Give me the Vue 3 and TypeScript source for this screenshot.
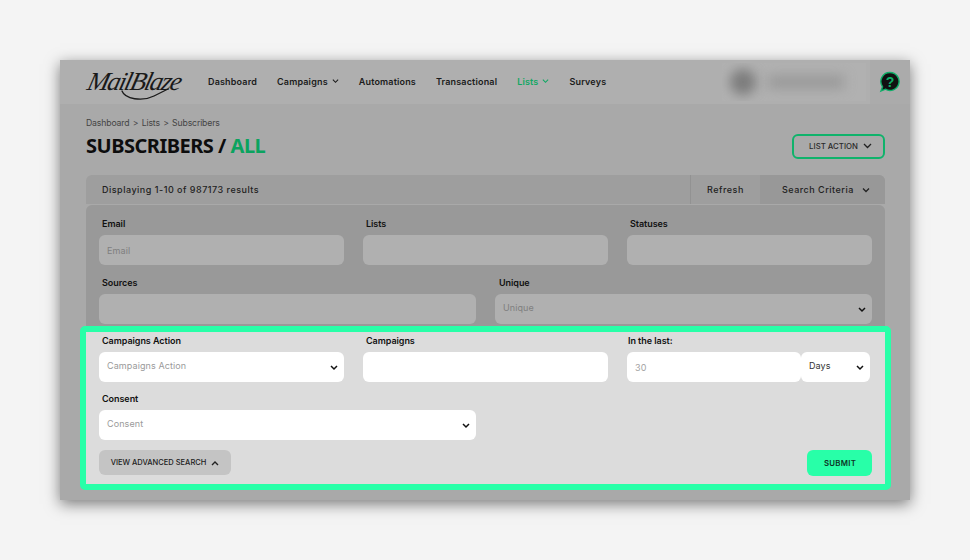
<script setup lang="ts">
const nav = [
  { label: 'Dashboard' },
  { label: 'Campaigns', chevron: true },
  { label: 'Automations' },
  { label: 'Transactional' },
  { label: 'Lists', chevron: true, active: true },
  { label: 'Surveys' },
]
</script>

<template>
  <div class="page">
    <div class="card">
      <header class="top">
        <div class="logo">
          <span class="logo-text">MailBlaze</span>
          <svg class="swash" width="60" height="14" viewBox="0 0 60 14" fill="none">
            <path d="M2 3C5 11 22 14 34 8C42 4 46 2 48 1" stroke="#1a1a1a" stroke-width="1.3" stroke-linecap="round" />
          </svg>
        </div>
        <nav class="nav">
          <a v-for="n in nav" :key="n.label" class="nav-item" :class="{ active: n.active }">
            {{ n.label }}
            <svg v-if="n.chevron" width="7" height="6" viewBox="0 0 8 6" fill="none"><path d="M1 1.5L4 4.5L7 1.5" stroke="currentColor" stroke-width="1.2" /></svg>
          </a>
        </nav>
        <div class="user">
          <span class="avatar"></span>
          <span class="uname"></span>
        </div>
        <div class="help">
          <svg width="22" height="22" viewBox="0 0 22 22">
            <path d="M11 1.5a9 9 0 1 1-4.6 16.7L2 20l1.6-4.2A9 9 0 0 1 11 1.5Z" fill="#111" stroke="#0fae68" stroke-width="1.4" />
            <text x="11" y="16" text-anchor="middle" class="qmark">?</text>
          </svg>
        </div>
      </header>

      <main class="body">
        <div class="crumbs">Dashboard <i>&gt;</i> Lists <i>&gt;</i> Subscribers</div>
        <div class="title-row">
          <h1>SUBSCRIBERS / <span>ALL</span></h1>
          <button class="list-action">
            LIST ACTION
            <svg width="9" height="6" viewBox="0 0 9 6" fill="none"><path d="M1 1L4.5 4.5L8 1" stroke="#222" stroke-width="1.3" /></svg>
          </button>
        </div>

        <div class="bar">
          <div class="bar-info">Displaying 1-10 of 987173 results</div>
          <div class="bar-refresh">Refresh</div>
          <div class="bar-criteria">
            Search Criteria
            <svg width="8" height="6" viewBox="0 0 8 6" fill="none"><path d="M1 1.5L4 4.5L7 1.5" stroke="#222" stroke-width="1.3" /></svg>
          </div>
        </div>

        <section class="panel">
          <div class="dim">
            <div class="row three">
              <label class="field"><b>Email</b><input placeholder="Email" /></label>
              <label class="field"><b>Lists</b><input /></label>
              <label class="field"><b>Statuses</b><input /></label>
            </div>
            <div class="row two">
              <label class="field"><b>Sources</b><input /></label>
              <div class="field unique"><b>Unique</b>
                <div class="select">Unique
                  <svg width="8" height="6" viewBox="0 0 8 6" fill="none"><path d="M1 1L4 4L7 1" stroke="#111" stroke-width="1.5" /></svg>
                </div>
              </div>
            </div>
          </div>

          <div class="focus">
            <div class="row three">
              <div class="field"><b>Campaigns Action</b>
                <div class="select">Campaigns Action
                  <svg width="8" height="6" viewBox="0 0 8 6" fill="none"><path d="M1 1L4 4L7 1" stroke="#111" stroke-width="1.5" /></svg>
                </div>
              </div>
              <label class="field"><b>Campaigns</b><input /></label>
              <div class="field in-last"><b>In the last:</b>
                <div class="last">
                  <input placeholder="30" />
                  <div class="select days">Days
                    <svg width="8" height="6" viewBox="0 0 8 6" fill="none"><path d="M1 1L4 4L7 1" stroke="#111" stroke-width="1.5" /></svg>
                  </div>
                </div>
              </div>
            </div>
            <div class="row two tight">
              <div class="field"><b>Consent</b>
                <div class="select">Consent
                  <svg width="8" height="6" viewBox="0 0 8 6" fill="none"><path d="M1 1L4 4L7 1" stroke="#111" stroke-width="1.5" /></svg>
                </div>
              </div>
            </div>
            <div class="actions">
              <button class="advanced">
                VIEW ADVANCED SEARCH
                <svg width="8" height="6" viewBox="0 0 8 6" fill="none"><path d="M1 5L4 2L7 5" stroke="#222" stroke-width="1.4" /></svg>
              </button>
              <button class="submit">SUBMIT</button>
            </div>
          </div>
        </section>
      </main>
    </div>
  </div>
</template>

<style>
html, body { margin: 0; background: #f4f4f4; }
</style>

<style scoped>
.page {
  width: 970px;
  height: 560px;
  padding: 60px 60px 0;
  box-sizing: border-box;
  font-family: Inter, "Liberation Sans", sans-serif;
  overflow: hidden;
}
.card {
  width: 850px;
  height: 440px;
  background: #a9a9a9;
  box-shadow: 0 4px 14px rgba(0, 0, 0, 0.5);
}
.top {
  height: 44px;
  background: #afafaf;
  display: flex;
  align-items: center;
}
.logo {
  width: 148px;
  padding-left: 28px;
  box-sizing: border-box;
  position: relative;
  flex: none;
}
.logo-text {
  font-family: "Liberation Serif", serif;
  font-style: italic;
  font-weight: 400;
  font-size: 26px;
  letter-spacing: -1.6px;
  color: #1a1a1a;
  display: inline-block;
  transform: skewX(-14deg);
}
.swash { position: absolute; left: 60px; top: 21px; }
.nav { display: flex; gap: 20px; flex: none; width: 514px; padding-bottom: 2px; }
.nav-item {
  font-size: 9px;
  font-weight: 600;
  letter-spacing: 0.17px;
  color: #1b1b1b;
  display: flex;
  align-items: center;
  gap: 4px;
}
.nav-item.active { color: #0fa763; }
.user {
  flex: none;
  width: 144px;
  height: 38px;
  background: #b1b1b1;
  display: flex;
  align-items: center;
  overflow: hidden;
}
.avatar {
  width: 26px;
  height: 26px;
  margin-left: 8px;
  border-radius: 50%;
  background: #7c7c7c;
  filter: blur(6px);
}
.uname {
  width: 76px;
  height: 14px;
  margin-left: 12px;
  background: #9a9a9a;
  filter: blur(6px);
}
.help {
  margin-left: 4px;
  width: 40px;
  height: 44px;
  background: #ababab;
  display: flex;
  align-items: center;
  justify-content: center;
}
.qmark {
  font-family: "Liberation Sans", sans-serif;
  font-size: 14px;
  font-weight: 700;
  fill: #0fae68;
}
.body { padding: 0 25px 0 26px; }
.crumbs {
  padding-top: 13px;
  font-size: 8.7px;
  line-height: 12px;
  letter-spacing: -0.15px;
  color: #444;
}
.crumbs i { font-style: normal; margin: 0 1px; }
.title-row {
  margin-top: 5px;
  height: 24px;
  display: flex;
  align-items: center;
  justify-content: space-between;
}
h1 {
  margin: 0;
  font-family: "Noto Sans", sans-serif;
  font-size: 20px;
  line-height: 24px;
  font-weight: 700;
  letter-spacing: -0.5px;
  color: #0d0d0d;
}
h1 span { color: #0aa35f; }
.list-action {
  width: 93px;
  height: 25px;
  box-sizing: border-box;
  border: 2px solid #0fb36b;
  border-radius: 6px;
  background: transparent;
  font: 500 7.8px Inter, sans-serif;
  color: #2a2a2a;
  display: flex;
  align-items: center;
  justify-content: center;
  gap: 5px;
  padding: 0 0 0 4px;
}
.bar {
  margin-top: 17px;
  height: 29px;
  display: flex;
  background: #9e9e9e;
  border-radius: 6px 6px 0 0;
  font-size: 9px;
  font-weight: 500;
  letter-spacing: 0.5px;
  color: #222;
  overflow: hidden;
}
.bar > div { display: flex; align-items: center; }
.bar-info { flex: 1; padding-left: 16px; }
.bar-refresh {
  width: 70px;
  box-sizing: border-box;
  justify-content: center;
  border-left: 1px solid #929292;
}
.bar-criteria {
  width: 125px;
  box-sizing: border-box;
  padding-left: 22px;
  gap: 8px;
  background: #989898;
}
.panel {
  margin-top: 1px;
  background: #999;
  border-radius: 6px 6px 0 0;
}
.dim { padding: 11px 13px 0; }
.row { display: grid; column-gap: 19px; row-gap: 0; }
.three { grid-template-columns: repeat(3, 245px); }
.two { grid-template-columns: repeat(2, 377px); margin-top: 10px; }
.tight { margin-top: 9px; }
.field { display: block; }
.field b {
  display: block;
  height: 14px;
  margin: 0 0 5px 3px;
  font-size: 9px;
  line-height: 16px;
  font-weight: 600;
  letter-spacing: -0.05px;
  color: #111;
}
.unique b { margin-left: 4px; }
.in-last b { margin-left: 1px; }
input, .select {
  display: block;
  width: 100%;
  height: 30px;
  box-sizing: border-box;
  border: 0;
  outline: 0;
  padding: 0 8px;
  border-radius: 6px;
  background: #b0b0b0;
  font: 400 9px Inter, sans-serif;
  letter-spacing: 0.1px;
  color: #7f7f7f;
}
input::placeholder { color: #7f7f7f; opacity: 1; }
.select {
  display: flex;
  align-items: center;
  justify-content: space-between;
  padding-right: 6px;
  padding-bottom: 4px;
}
.select svg { margin-top: 6px; }
.focus {
  margin: 2px -6px 0;
  width: 811px;
  box-sizing: border-box;
  border: 6px solid #28ffa8;
  border-radius: 5px;
  background: #dcdcdc;
  padding: 1px 13px 8px;
  position: relative;
}
.focus input, .focus .select { background: #fff; color: #9a9a9a; }
.focus input::placeholder { color: #a3a3a3; }
.last { display: flex; margin-right: 2px; }
.last input { flex: 1; width: auto; min-width: 0; }
.select.days { flex: none; width: 69px; color: #333; }
.actions {
  margin-top: 10px;
  display: flex;
  justify-content: space-between;
  align-items: flex-start;
}
button { cursor: pointer; }
.advanced {
  width: 132px;
  height: 25px;
  border: 0;
  border-radius: 6px;
  background: #c4c4c4;
  font: 500 7.5px Inter, sans-serif;
  color: #1c1c1c;
  display: flex;
  align-items: center;
  justify-content: center;
  gap: 5px;
  padding: 0;
}
.submit {
  width: 65px;
  height: 26px;
  border: 0;
  border-radius: 6px;
  background: #28ffa8;
  font: 600 7.8px Inter, sans-serif;
  letter-spacing: 0.3px;
  color: #0d3526;
  padding: 0 0 0 1px;
}
</style>
